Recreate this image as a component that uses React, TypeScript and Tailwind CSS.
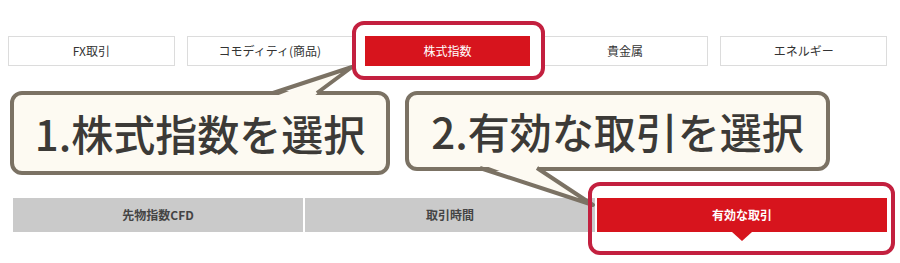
import React from "react";

const jp = { fontFamily: '"Noto Sans CJK JP", "Noto Sans", sans-serif' };

export default function App() {
  const topTabs = ["FX取引", "コモディティ(商品)", "株式指数", "貴金属", "エネルギー"];
  const bottomTabs = ["先物指数CFD", "取引時間", "有効な取引"];
  return (
    <div className="relative w-[900px] h-[263px] overflow-hidden bg-white" style={jp}>
      {/* top tabs */}
      <div className="ml-[8px] mt-[36px] flex w-[879px] gap-[12px]">
        {topTabs.map((t, i) =>
          i === 2 ? (
            <div key={t} className="flex h-[30px] flex-1 items-center justify-center bg-[#d7141d] text-[12px] text-white">
              {t}
            </div>
          ) : (
            <div key={t} className="flex h-[30px] flex-1 items-center justify-center border border-[#dcdcdc] bg-white text-[12px] text-[#333]">
              {t}
            </div>
          )
        )}
      </div>

      {/* callouts */}
      <div className="mt-[25px] flex items-start">
        <div className="ml-[10px] flex h-[84px] w-[380px] items-center justify-center rounded-[12px] border-[4px] border-[#7b7264] bg-[#fdfaf2] text-[42px] font-medium leading-none text-[#3c3a37]">
          1.株式指数を選択
        </div>
        <div className="ml-[15px] flex h-[80px] w-[425px] items-center justify-center rounded-[12px] border-[4px] border-[#7b7264] bg-[#fdfaf2] text-[42px] font-medium leading-none text-[#3c3a37]">
          2.有効な取引を選択
        </div>
      </div>

      {/* bottom tabs */}
      <div className="ml-[13px] mt-[23px] grid h-[34px] w-[874px] grid-cols-3 gap-[2px]">
        {bottomTabs.map((t, i) =>
          i === 2 ? (
            <div key={t} className="relative flex items-center justify-center bg-[#d7141d] text-[12px] font-bold text-white">
              {t}
              <div className="absolute left-1/2 top-full h-0 w-0 -translate-x-1/2 border-x-[10px] border-t-[9px] border-x-transparent border-t-[#d7141d]" />
            </div>
          ) : (
            <div key={t} className="flex items-center justify-center bg-[#cacaca] text-[12px] font-bold text-[#444]">
              {t}
            </div>
          )
        )}
      </div>

      {/* callout tails */}
      <svg className="absolute left-0 top-0" width="900" height="263" viewBox="0 0 900 263">
        <polygon points="276,96 352,67 314,96" fill="#fdfaf2" />
        <polyline points="273,93 352,67 317,93" fill="none" stroke="#7b7264" strokeWidth="4" strokeLinejoin="round" />
        <polygon points="483,165 593,205 534,165" fill="#fdfaf2" />
        <polyline points="480,168 593,205 537,168" fill="none" stroke="#7b7264" strokeWidth="4" strokeLinejoin="round" />
      </svg>

      {/* highlight outlines */}
      <div className="absolute left-[352px] top-[21px] h-[59px] w-[193px] rounded-[12px] border-[4px] border-[#c3203f]" />
      <div className="absolute left-[588px] top-[182px] h-[73px] w-[307px] rounded-[12px] border-[4px] border-[#c3203f]" />
    </div>
  );
}
